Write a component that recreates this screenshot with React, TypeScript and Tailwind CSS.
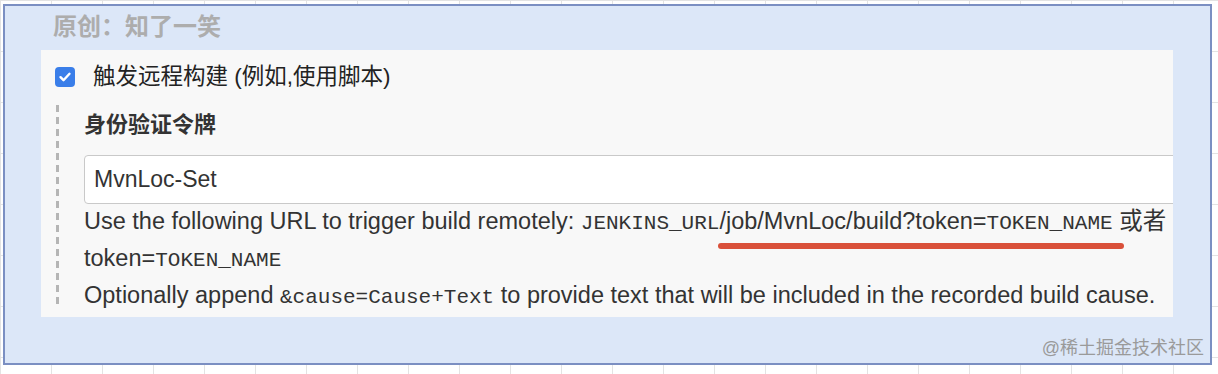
import React from "react";

const sans = "font-['Liberation_Sans','Noto_Sans_CJK_SC',sans-serif]";
const mono = "font-['Liberation_Mono','Noto_Sans_CJK_SC',monospace]";

const Code = ({ children }: { children: React.ReactNode }) => (
  <span className={`${mono} text-[21px]`}>{children}</span>
);

const TriggerPanel = () => {
  return (
    <div className="relative ml-[36px] mr-[37px] mt-[7px] h-[267px] overflow-hidden bg-[#f8f8f8] pl-[14px] pt-[13px]">
      <div className="flex items-center gap-[18px]">
        <span className="flex h-[20px] w-[20px] shrink-0 items-center justify-center rounded-[4px] bg-[#3a7ee9]">
          <svg width="14" height="14" viewBox="0 0 14 14" fill="none">
            <path
              d="M2.5 7.2l3 3 6-6.4"
              stroke="white"
              strokeWidth="2.4"
              strokeLinecap="round"
              strokeLinejoin="round"
            />
          </svg>
        </span>
        <span className="text-[22.5px] leading-[28px] text-[#222]">
          触发远程构建 (例如,使用脚本)
        </span>
      </div>

      <div className="mt-[12px] flex">
        <div className="ml-[1px] mt-[2px] h-[200px] w-[3px] shrink-0 bg-[image:repeating-linear-gradient(to_bottom,#b5b5b5_0px,#b5b5b5_7px,transparent_7px,transparent_12px)]" />
        <div className="ml-[25px] min-w-0 flex-1">
          <div className="mt-[7px] text-[22px] leading-[30px] font-semibold text-[#333]">
            身份验证令牌
          </div>
          <div className="mt-[15px] h-[49px] w-[1120px] rounded-[4px] border border-[#c9c9c9] bg-white pl-[9px] text-[23px] leading-[47px] text-[#333]">
            MvnLoc-Set
          </div>
          <div className="text-[23.5px] leading-[35px] text-[#333]">
            <div className="whitespace-nowrap">
              Use the following URL to trigger build remotely:{" "}
              <Code>JENKINS_URL</Code>/job/MvnLoc/build?token=
              <Code>TOKEN_NAME</Code> 或者
            </div>
            <div>
              token=<Code>TOKEN_NAME</Code>
            </div>
            <div className="whitespace-nowrap">
              Optionally append <Code>&amp;cause=Cause+Text</Code> to provide
              text that will be included in the recorded build cause.
            </div>
          </div>
        </div>
      </div>

      <div className="absolute left-[677px] top-[193px] h-[6px] w-[406px] rounded-full bg-[#d9503a]" />
    </div>
  );
};

export default function App() {
  return (
    <div
      className={`${sans} h-[374px] w-[1218px] bg-white bg-[linear-gradient(to_right,#e3e3e3_1px,transparent_1px),linear-gradient(to_bottom,#e3e3e3_1px,transparent_1px)] bg-[size:51px_51px] pl-[3px] pt-[4px]`}
    >
      <div className="relative h-[361px] w-[1209px] border-2 border-[#7b8fc2] bg-[#dce7f8]">
        <div className="pl-[48px] pt-[5px] text-[24px] leading-[32px] font-bold text-[#adadad]">
          原创：知了一笑
        </div>
        <TriggerPanel />
        <div className="absolute bottom-[3px] right-[6px] text-[18px] leading-[24px] text-[#9a9a9a]">
          @稀土掘金技术社区
        </div>
      </div>
    </div>
  );
}
